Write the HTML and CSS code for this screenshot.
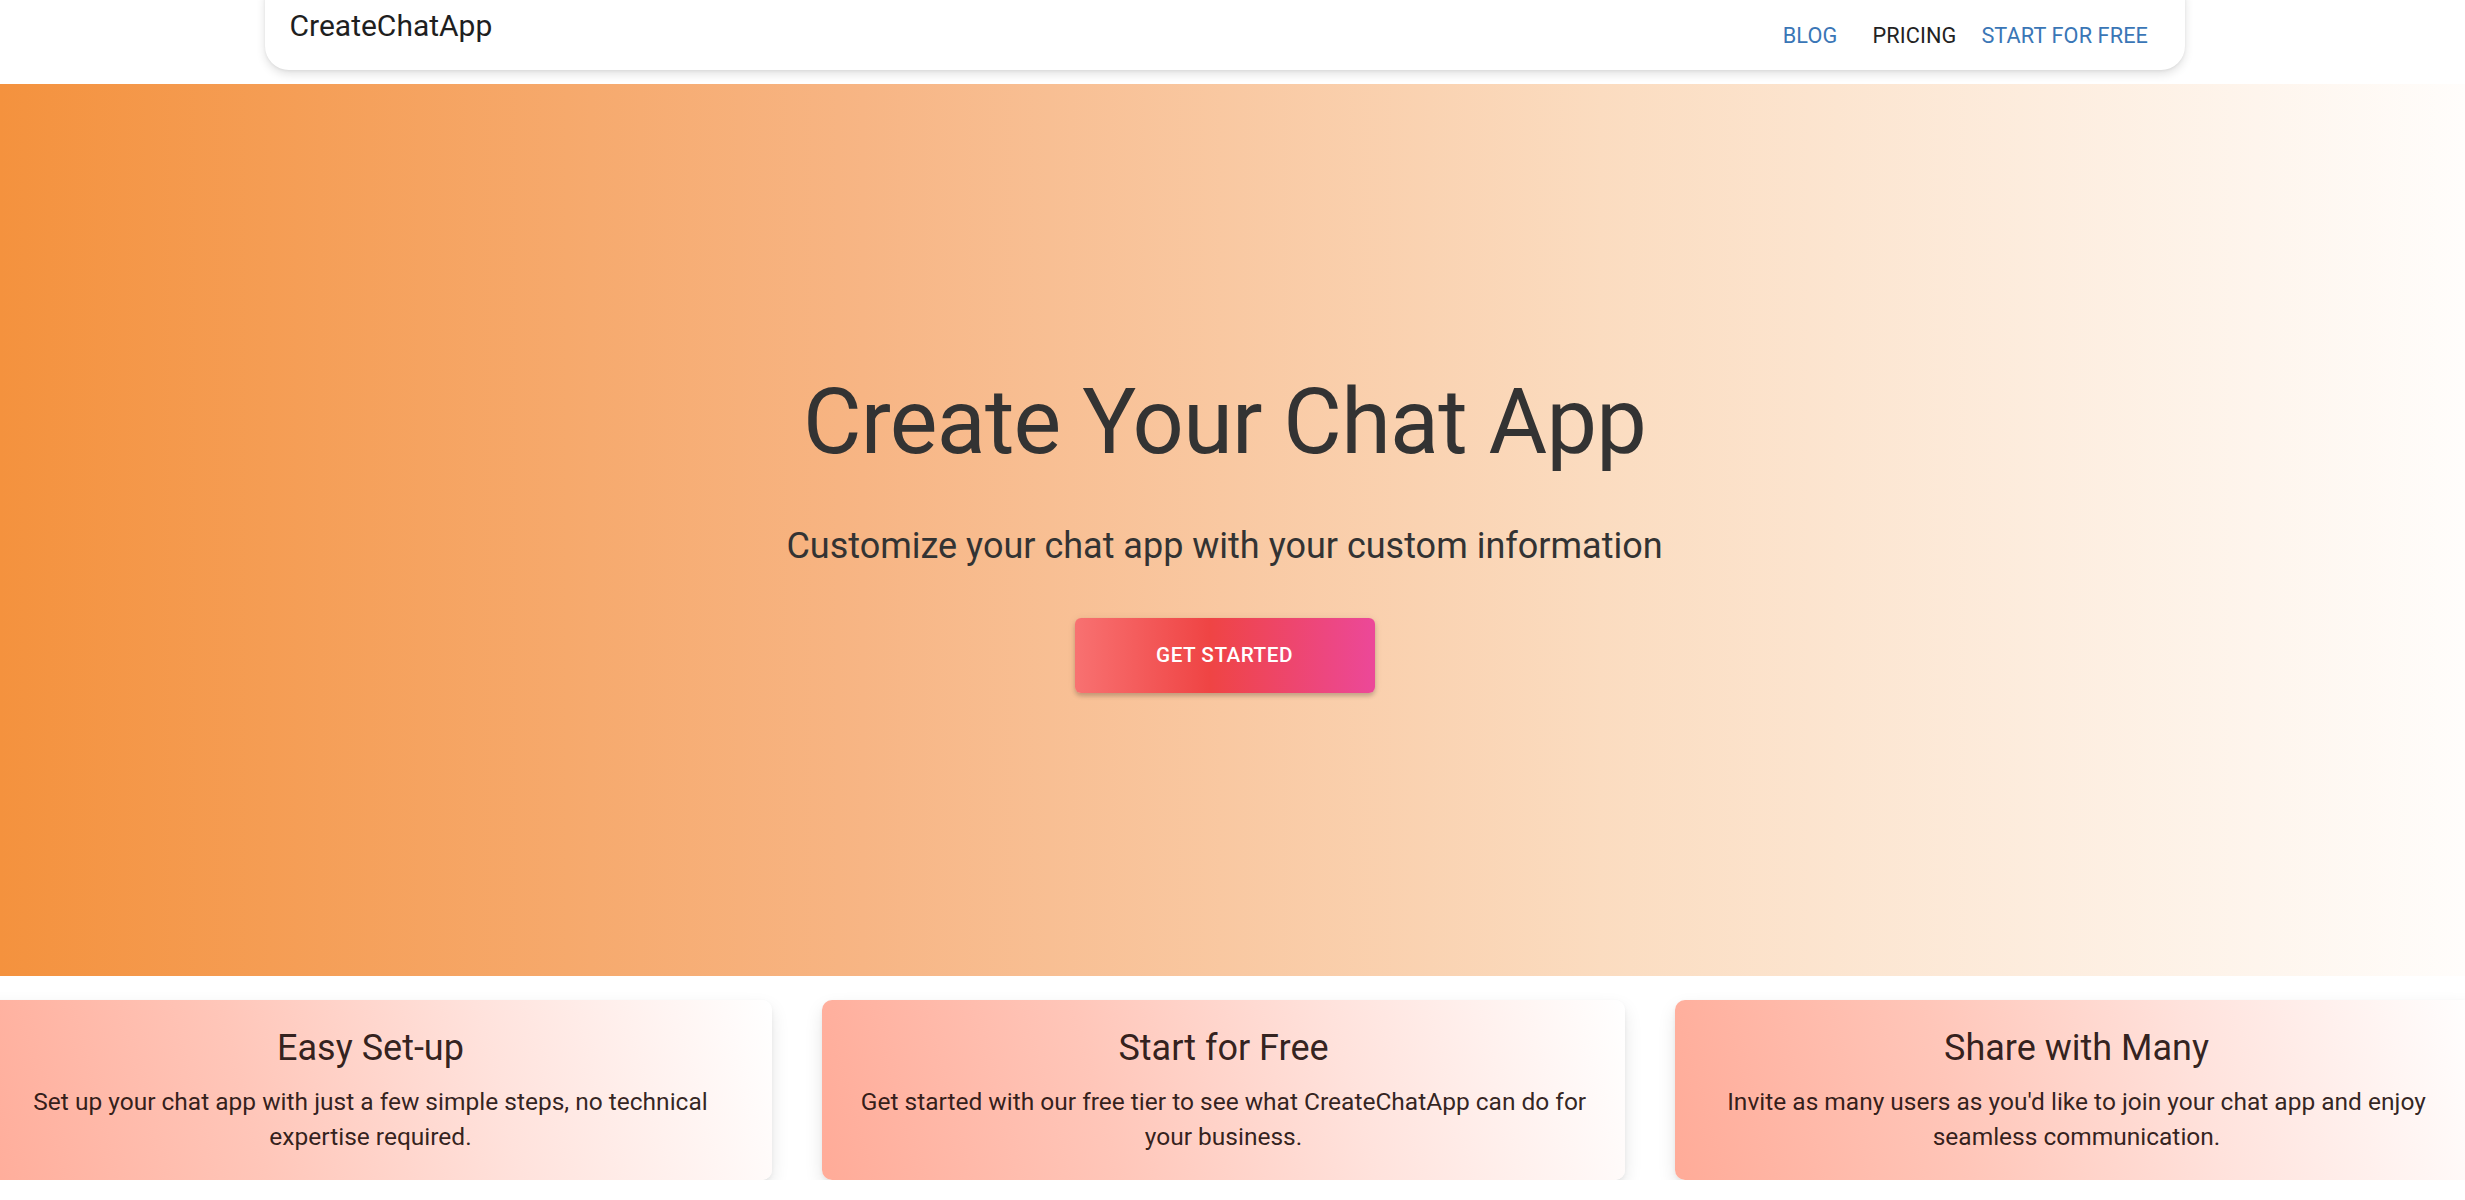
FILE: index.html
```html
<!DOCTYPE html>
<html lang="en">
<head>
<meta charset="utf-8">
<title>CreateChatApp</title>
<link rel="stylesheet" href="styles.css">
</head>
<body>
<header class="navbar">
  <div class="logo">CreateChatApp</div>
  <nav class="nav-links">
    <a class="nav-link nav-link--blue" href="#">Blog</a>
    <a class="nav-link nav-link--dark" href="#">Pricing</a>
    <a class="nav-link nav-link--blue" href="#">Start for free</a>
  </nav>
</header>

<section class="hero">
  <h1 class="hero-title">Create Your Chat App</h1>
  <p class="hero-subtitle">Customize your chat app with your custom information</p>
  <a class="hero-button" href="#">Get started</a>
</section>

<section class="features">
  <div class="card">
    <h2 class="card-title">Easy Set-up</h2>
    <p class="card-text">Set up your chat app with just a few simple steps, no technical expertise required.</p>
  </div>
  <div class="card">
    <h2 class="card-title">Start for Free</h2>
    <p class="card-text">Get started with our free tier to see what CreateChatApp can do for your business.</p>
  </div>
  <div class="card">
    <h2 class="card-title">Share with Many</h2>
    <p class="card-text">Invite as many users as you'd like to join your chat app and enjoy seamless communication.</p>
  </div>
</section>
</body>
</html>
```

FILE: styles.css
```css
* { box-sizing: border-box; }

html, body {
  margin: 0;
  padding: 0;
  background: #ffffff;
  font-family: Roboto, "Liberation Sans", Arial, sans-serif;
  overflow: hidden;
}

.navbar {
  width: 1920px;
  height: 94px;
  margin-top: -24px;
  margin-left: calc(50% - 968px);
  padding: 26px 24px 0 24px;
  background: #ffffff;
  border-radius: 24px;
  box-shadow: 0 4px 10px rgba(0, 0, 0, 0.12), 0 1px 3px rgba(0, 0, 0, 0.06);
  display: flex;
  justify-content: space-between;
  align-items: flex-start;
  position: relative;
  z-index: 2;
}

.logo {
  font-size: 30px;
  line-height: 48px;
  color: #1f1f1f;
  margin-top: -24px;
  padding-top: 24px;
  margin-left: 1px;
}

.nav-links {
  display: flex;
  margin-top: 16px;
}

.nav-link {
  min-width: 100px;
  padding: 0 12.5px;
  text-align: center;
  font-size: 21.7px;
  line-height: 36px;
  letter-spacing: 0.1px;
  text-transform: uppercase;
  text-decoration: none;
  white-space: nowrap;
}

.nav-link--blue { color: #3a76b6; }
.nav-link--dark { color: #222222; }

.hero {
  margin-top: 14px;
  height: 892px;
  padding-right: 16px;
  background: linear-gradient(90deg, #f4923e 0%, #f7b584 35%, #fbdcc0 65%, #fffdfb 100%);
  display: flex;
  flex-direction: column;
  align-items: center;
  justify-content: center;
}

.hero-title {
  margin: 0;
  font-size: 90px;
  font-weight: 400;
  line-height: 109px;
  color: #333333;
  letter-spacing: -0.75px;
}

.hero-subtitle {
  margin: 47px 0 0 0;
  font-size: 36px;
  line-height: 45px;
  color: #333333;
}

.hero-button {
  margin-top: 49px;
  width: 300px;
  height: 75px;
  display: flex;
  align-items: center;
  justify-content: center;
  border-radius: 6px;
  background: linear-gradient(90deg, #f87171 0%, #ef4444 45%, #ec4899 100%);
  box-shadow: 0 3px 4px rgba(0, 0, 0, 0.18), 0 1px 8px rgba(0, 0, 0, 0.08);
  color: #ffffff;
  font-size: 20.7px;
  font-weight: 500;
  letter-spacing: 0.5px;
  text-transform: uppercase;
  text-decoration: none;
}

.features {
  width: 2509px;
  margin-left: calc(50% - 1263.5px);
  margin-top: 24px;
  display: flex;
  gap: 50px;
}

.card {
  flex: 0 0 803px;
  height: 180px;
  padding: 26px 25px 0 25px;
  border-radius: 10px;
  background: linear-gradient(75deg, #ffab98 0%, #ffc6b9 35%, #ffe2dc 65%, #ffffff 100%);
  box-shadow: 0 8px 18px rgba(0, 0, 0, 0.10), 0 2px 4px rgba(0, 0, 0, 0.05);
  text-align: center;
  color: rgba(25, 10, 8, 0.9);
}

.card-title {
  margin: 0;
  font-size: 36px;
  font-weight: 400;
  line-height: 45px;
}

.card-text {
  margin: 13px 0 0 0;
  font-size: 24.5px;
  line-height: 35px;
}
```
